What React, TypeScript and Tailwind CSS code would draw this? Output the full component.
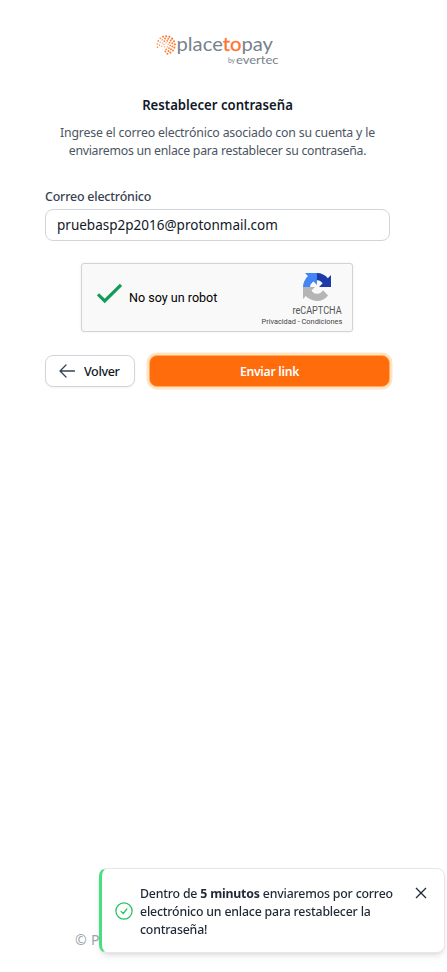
import React from "react";

// Rings of the dotted emblem: radius, number of dots, dot size.
const rings = [
  { r: 2.2, n: 5, s: 0.6 },
  { r: 4.3, n: 9, s: 0.85 },
  { r: 6.5, n: 13, s: 0.95 },
  { r: 8.8, n: 17, s: 1.05 },
];

function Logo() {
  return (
    <svg width="126" height="34" viewBox="0 0 126 34" className="block overflow-visible" aria-label="placetopay by evertec">
      <g fill="#ff7a32">
        {rings.map((ring) =>
          Array.from({ length: ring.n }, (_, i) => {
            const a = (i / ring.n) * Math.PI * 2 + ring.r;
            const x = 11 + Math.cos(a) * ring.r;
            const y = 11 + Math.sin(a) * ring.r;
            if (x < 10 && y > 14) return null;
            return <circle key={`${ring.r}-${i}`} cx={x} cy={y} r={x < 8 ? ring.s * 0.75 : ring.s} />;
          })
        )}
      </g>
      <text x="21.5" y="17" textLength="96.500" lengthAdjust="spacingAndGlyphs" className="text-[19px] font-normal" fontFamily="Lato, sans-serif" fill="#78828b">
        place<tspan fill="#ff7430" stroke="#ff7430" strokeWidth="0.3">to</tspan>pay
      </text>
      <text x="73" y="29" textLength="7" lengthAdjust="spacingAndGlyphs" className="text-[8px]" fontFamily="Lato, sans-serif" fill="#78828b">by</text>
      <text x="81" y="30" textLength="42.500" lengthAdjust="spacingAndGlyphs" className="text-[12px]" fontFamily="Lato, sans-serif" fill="#78828b">evertec</text>
    </svg>
  );
}

function Recaptcha() {
  return (
    <div className="mt-[22px] ml-[36px] flex h-[69px] w-[272px] justify-between rounded-[3px] border border-[#d3d3d3] bg-[#f9f9f9] font-[Roboto,sans-serif] shadow-[0_0_3px_rgba(0,0,0,0.08)]">
      <div className="flex items-center pl-[15px]">
        <svg width="26" height="22" viewBox="0 0 26 22" fill="none" stroke="#0f9d58" strokeWidth="3.2" className="-mt-[8px]">
          <path d="M1 11.300 7.700 18 24 1.800" />
        </svg>
        <span className="ml-[6px] origin-left scale-x-[0.965] text-[13px] text-black">No soy un robot</span>
      </div>
      <div className="flex w-[100px] flex-col items-center pt-[9px]">
        <svg width="28" height="28" viewBox="0 0 64 64" className="ml-[30px]">
          <path fill="#1c3aa9" d="M64 31.955l-.033-1.370V4.687l-7.160 7.160C50.948 4.674 42.033.093 32.050.093c-10.400 0-19.622 4.960-25.458 12.640l11.736 11.860a15.550 15.550 0 0 1 4.754-5.334c2.050-1.600 4.952-2.906 8.968-2.906.485 0 .860.057 1.135.163 4.976.393 9.288 3.140 11.828 7.124l-8.307 8.307L64 31.953" />
          <path fill="#4285f4" d="M31.862.094l-1.370.033H4.594l7.160 7.160C4.580 13.147 0 22.060 0 32.046c0 10.400 4.960 19.622 12.640 25.458L24.500 45.768a15.550 15.550 0 0 1-5.334-4.754c-1.600-2.050-2.906-4.952-2.906-8.968 0-.485.057-.860.163-1.135.393-4.976 3.140-9.288 7.124-11.828l8.307 8.307L31.860.095" />
          <path fill="#b5b5b5" d="M.001 32.045l.033 1.370v25.898l7.160-7.160c5.860 7.173 14.774 11.754 24.760 11.754 10.400 0 19.622-4.960 25.458-12.640l-11.736-11.860a15.550 15.550 0 0 1-4.754 5.334c-2.050 1.600-4.952 2.906-8.968 2.906-.485 0-.860-.057-1.135-.163-4.976-.393-9.288-3.140-11.828-7.124l8.307-8.307L0 32.045" />
        </svg>
        <span className="mt-[4px] ml-[30px] scale-x-[0.91] text-[10px] leading-[11px] text-[#555]">reCAPTCHA</span>
        <span className="mt-px scale-x-[0.92] text-[8px] leading-[10px] whitespace-nowrap text-[#444]">Privacidad - Condiciones</span>
      </div>
    </div>
  );
}

function Toast() {
  return (
    <div className="fixed top-[868px] left-[99px] flex h-[85px] w-[346px] rounded-lg border border-l-[3px] border-[#e5e7eb] border-l-[#4ade80] bg-white pl-[12px] shadow-md">
      <svg width="20" height="20" viewBox="0 0 24 24" fill="none" stroke="#22c55e" strokeWidth="1.5" strokeLinecap="round" strokeLinejoin="round" className="mt-[32px] shrink-0">
        <circle cx="12" cy="12" r="9.750" />
        <path d="m8.500 12.500 2.600 2.500 4.400-5.500" />
      </svg>
      <p className="mt-[15px] ml-[6px] origin-left scale-x-[0.948] text-[13px] leading-[18px] font-medium tracking-[-0.2px] whitespace-nowrap text-[#1f2937]">
        Dentro de <b className="font-bold">5 minutos</b> enviaremos por correo
        <br />
        electrónico un enlace para restablecer la
        <br />
        contraseña!
      </p>
      <svg width="12" height="12" viewBox="0 0 12 12" stroke="#1f2937" strokeWidth="1.3" className="absolute top-[18px] right-[17px]">
        <path d="m1 1 10 10M11 1 1 11" />
      </svg>
    </div>
  );
}

export default function App() {
  return (
    <div className="flex h-[972px] w-[447px] flex-col overflow-hidden bg-white font-['Noto_Sans',sans-serif]">
      <header className="pt-[34px] pl-[155px]">
        <Logo />
      </header>
      <main className="ml-[45px] w-[345px]">
        <h1 className="mt-[27px] scale-x-[0.94] text-center text-[14px] leading-[20px] font-semibold whitespace-nowrap text-[#111827]">Restablecer contraseña</h1>
        <p className="mt-[8px] scale-x-[0.946] text-center text-[13px] leading-[18px] tracking-[-0.2px] whitespace-nowrap text-[#4b5563]">
          Ingrese el correo electrónico asociado con su cuenta y le
          <br />
          <span className="tracking-[-0.28px]">enviaremos un enlace para restablecer su contraseña.</span>
        </p>
        <label className="mt-[28px] block origin-left scale-x-[0.955] text-[13px] leading-[18px] font-medium tracking-[-0.2px] text-[#374151]">Correo electrónico</label>
        <div className="mt-[4px] flex h-[32px] items-center rounded-lg border border-[#d1d5db] px-[11px] pb-[2px] text-[14px] text-[#111827]">
          <span className="origin-left scale-x-[0.965]">pruebasp2p2016@protonmail.com</span>
        </div>
        <Recaptcha />
        <div className="mt-[23px] flex gap-[14px]">
          <button className="flex h-[32px] w-[90px] items-center rounded-lg border border-[#d1d5db] bg-white pl-[13px] text-[13px] font-medium text-[#111827] shadow-xs">
            <svg width="17" height="14" viewBox="0 0 17 14" fill="none" stroke="#374151" strokeWidth="1.300" strokeLinecap="round" strokeLinejoin="round">
              <path d="M7 1 1 7l6 6M1 7h14.500" />
            </svg>
            <span className="ml-[8px] origin-left scale-x-[0.97] pt-[2px] tracking-[-0.4px]">Volver</span>
          </button>
          <button className="flex h-[32px] w-[241px] items-center justify-center rounded-lg border border-[#ffab60] bg-[#ff6c0c] text-[13px] font-semibold tracking-[-0.3px] text-white shadow-[0_0_0_2.5px_#ffe4c2]">
            <span className="scale-x-[0.94] pt-[2px]">Enviar link</span>
          </button>
        </div>
      </main>
      <footer className="mt-[543px] ml-[75px] text-[14px] leading-[20px] tracking-[0.3px] text-[#9ca3af]">© P</footer>
      <Toast />
    </div>
  );
}
